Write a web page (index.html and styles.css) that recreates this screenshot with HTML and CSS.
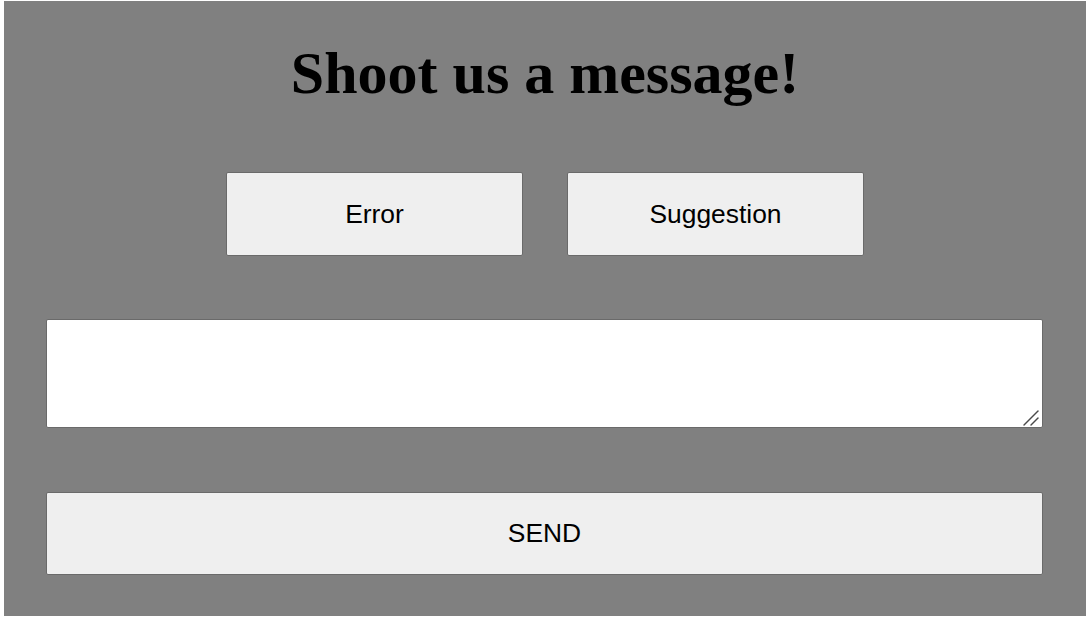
FILE: index.html
```html
<!DOCTYPE html>
<html lang="en">
<head>
<meta charset="utf-8">
<title>Shoot us a message!</title>
<link rel="stylesheet" href="styles.css">
</head>
<body>
<main class="page">
  <h1 class="title">Shoot us a message!</h1>
  <div class="choices">
    <button class="btn choice" type="button">Error</button>
    <button class="btn choice" type="button">Suggestion</button>
  </div>
  <div class="field">
    <textarea class="message"></textarea>
    <svg class="grip" width="18" height="18" viewBox="0 0 18 18" aria-hidden="true">
      <line x1="2" y1="16" x2="16" y2="2" stroke="#4a4a4a" stroke-width="1.4" stroke-linecap="round"/>
      <line x1="9" y1="16" x2="16" y2="9" stroke="#4a4a4a" stroke-width="1.4" stroke-linecap="round"/>
    </svg>
  </div>
  <button class="btn send" type="button">SEND</button>
</main>
</body>
</html>
```

FILE: styles.css
```css
html, body {
  margin: 0;
  padding: 0;
  background: #ffffff;
}

.page {
  box-sizing: border-box;
  width: 1082px;
  height: 615px;
  margin: 1px 6px 4px 4px;
  padding: 39px 42px 0 42px;
  background: #808080;
  display: flex;
  flex-direction: column;
  align-items: stretch;
}

.title {
  margin: 0;
  font-family: "Liberation Serif", "Times New Roman", serif;
  font-weight: bold;
  font-size: 60px;
  line-height: 66px;
  text-align: center;
  color: #000;
}

.choices {
  margin-top: 66px;
  display: flex;
  justify-content: center;
  gap: 44px;
}

.btn {
  box-sizing: border-box;
  background: #efefef;
  border: 1px solid #6a6a6a;
  border-radius: 2px;
  color: #000;
  font-family: "Liberation Sans", Arial, sans-serif;
  font-size: 26.4px;
  padding: 0;
  margin: 0;
}

.choice {
  width: 297px;
  height: 84px;
}

.field {
  position: relative;
  margin-top: 63px;
  width: 997px;
  height: 109px;
}

.message {
  box-sizing: border-box;
  display: block;
  width: 100%;
  height: 100%;
  background: #fff;
  border: 1px solid #6a6a6a;
  border-radius: 2px;
  padding: 2px;
  resize: none;
  font-family: "Liberation Mono", monospace;
  font-size: 13px;
}

.grip {
  position: absolute;
  right: 3px;
  bottom: 1px;
}

.send {
  margin-top: 64px;
  width: 997px;
  height: 83px;
}
```
